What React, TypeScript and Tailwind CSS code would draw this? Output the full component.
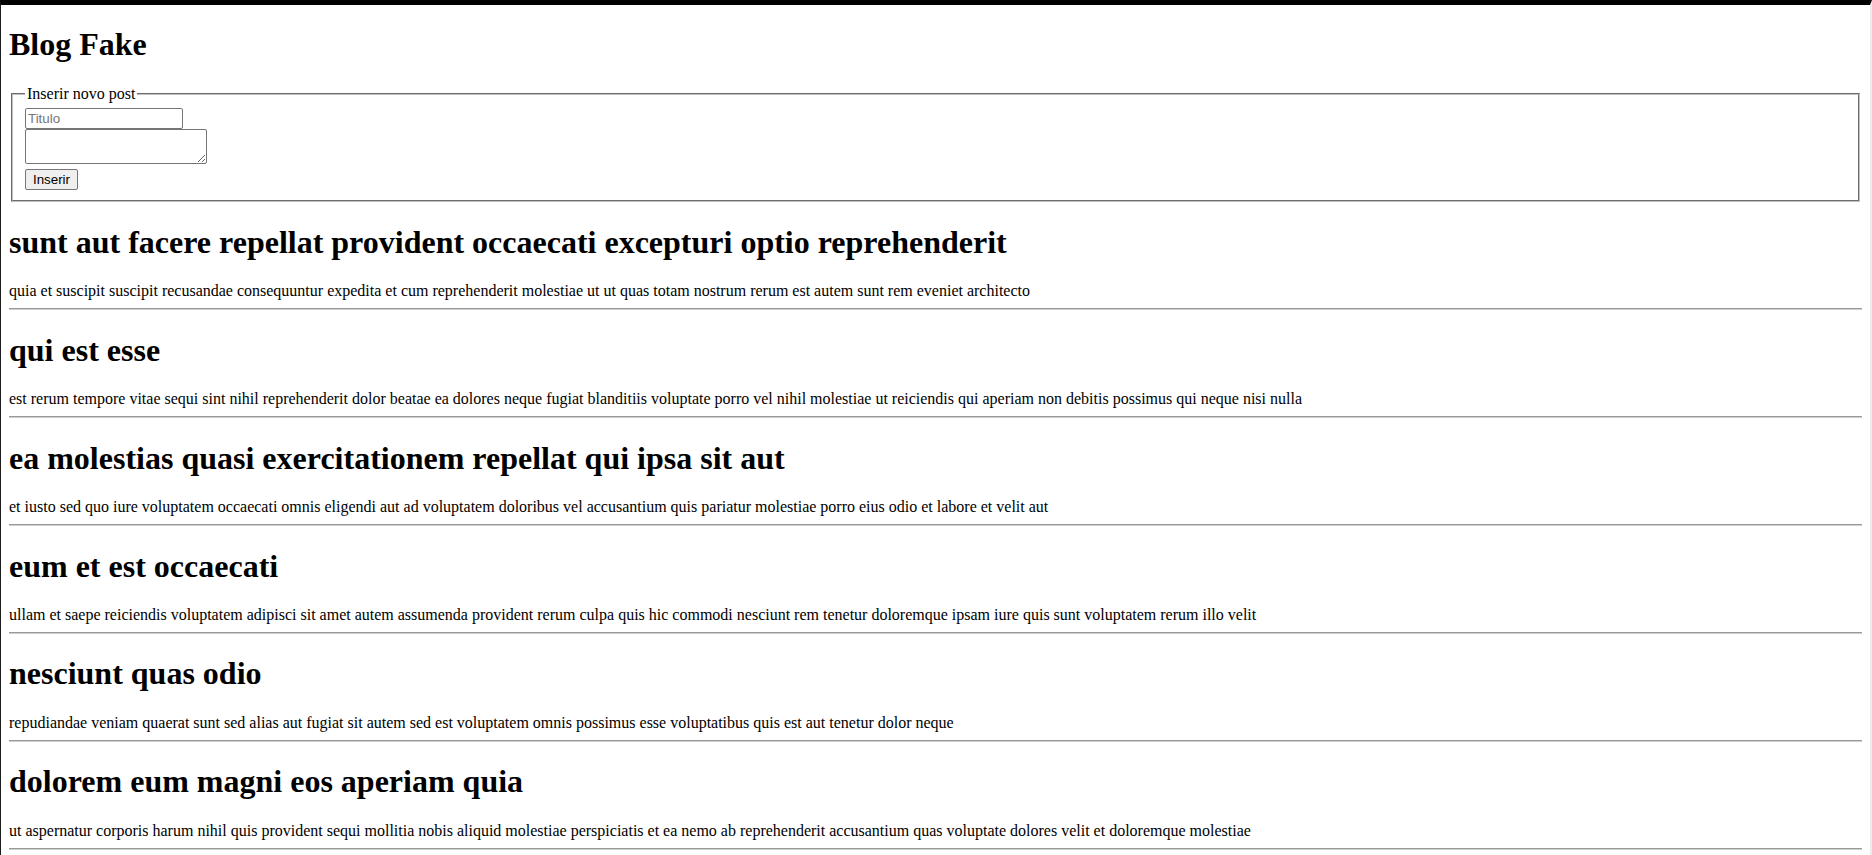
const POSTS: { title: string; body: string }[] = [
  {
    title: 'sunt aut facere repellat provident occaecati excepturi optio reprehenderit',
    body: 'quia et suscipit suscipit recusandae consequuntur expedita et cum reprehenderit molestiae ut ut quas totam nostrum rerum est autem sunt rem eveniet architecto',
  },
  {
    title: 'qui est esse',
    body: 'est rerum tempore vitae sequi sint nihil reprehenderit dolor beatae ea dolores neque fugiat blanditiis voluptate porro vel nihil molestiae ut reiciendis qui aperiam non debitis possimus qui neque nisi nulla',
  },
  {
    title: 'ea molestias quasi exercitationem repellat qui ipsa sit aut',
    body: 'et iusto sed quo iure voluptatem occaecati omnis eligendi aut ad voluptatem doloribus vel accusantium quis pariatur molestiae porro eius odio et labore et velit aut',
  },
  {
    title: 'eum et est occaecati',
    body: 'ullam et saepe reiciendis voluptatem adipisci sit amet autem assumenda provident rerum culpa quis hic commodi nesciunt rem tenetur doloremque ipsam iure quis sunt voluptatem rerum illo velit',
  },
  {
    title: 'nesciunt quas odio',
    body: 'repudiandae veniam quaerat sunt sed alias aut fugiat sit autem sed est voluptatem omnis possimus esse voluptatibus quis est aut tenetur dolor neque',
  },
  {
    title: 'dolorem eum magni eos aperiam quia',
    body: 'ut aspernatur corporis harum nihil quis provident sequi mollitia nobis aliquid molestiae perspiciatis et ea nemo ab reprehenderit accusantium quas voluptate dolores velit et doloremque molestiae',
  },
];

// plain browser-default look, rebuilt on top of preflight
const CONTROL_FONT = "font-['Liberation_Sans',Arial,sans-serif] text-[13.3333px] leading-[normal]";

export default function App() {
  return (
    <div className="h-screen overflow-hidden bg-white border-t-[5px] border-t-black border-l border-l-[#1c1c1c] border-r-2 border-r-[#ececec] font-['Liberation_Serif','Times_New_Roman',serif] text-[16px] leading-[normal] text-black">
      <div className="mx-2 mt-2">
        <h1 className="text-[32px] font-bold my-[0.67em]">Blog Fake</h1>

        <fieldset className="mx-[2px] px-3 pt-[0.35em] pb-[0.625em] border-2 [border-style:groove] border-[#c0c0c0]">
          <legend className="px-[2px]">Inserir novo post</legend>
          <div className="flex flex-col items-start">
            <input
              type="text"
              placeholder="Titulo"
              className={`${CONTROL_FONT} w-[158px] h-[21px] px-[2px] py-[1px] border border-[#767676] rounded-[2px] bg-white placeholder:text-[#757575]`}
            />
            <textarea
              className={`${CONTROL_FONT} w-[182px] h-[35px] px-[2px] py-[2px] border border-[#767676] rounded-[2px] bg-white resize`}
            />
            <button
              type="button"
              className={`${CONTROL_FONT} mt-[5px] w-[53px] h-[21px] px-[6px] border border-[#767676] rounded-[2px] bg-[#efefef] text-black`}
            >
              Inserir
            </button>
          </div>
        </fieldset>

        {POSTS.map(post => (
          <div key={post.title}>
            <h1 className="text-[32px] font-bold my-[0.67em]">{post.title}</h1>
            <div>{post.body}</div>
            <hr className="my-2 h-0 border-t border-b border-t-[#9a9a9a] border-b-[#cfcfcf]" />
          </div>
        ))}
      </div>
    </div>
  );
}
